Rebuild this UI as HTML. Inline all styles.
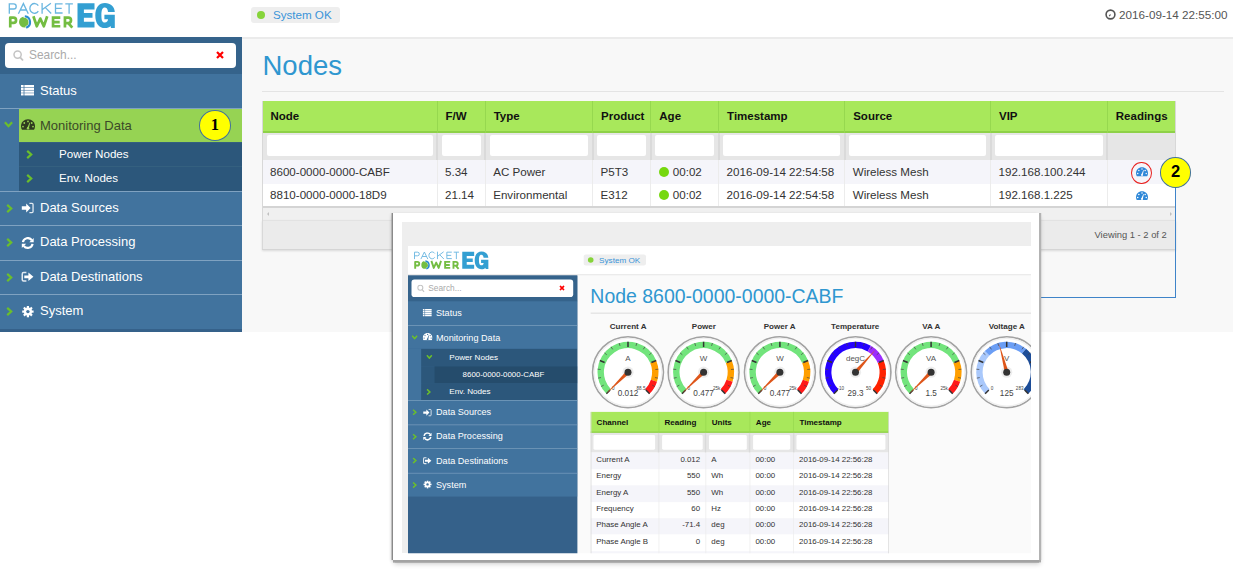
<!DOCTYPE html><html><head><meta charset="utf-8"><style>
*{box-sizing:border-box;margin:0;padding:0}
html,body{width:1234px;height:572px;overflow:hidden;background:#fff;font-family:"Liberation Sans",sans-serif;position:relative}
.abs{position:absolute}
.page{position:absolute;left:0;top:0;width:1234px;height:332px;overflow:hidden;background:#f8f8f8}
.hdr{position:absolute;left:0;top:0;width:100%;background:#fff;border-bottom:2px solid #ebebeb}
.badge{position:absolute;background:#eeeeee;border-radius:3px;color:#3a94d9;font-size:11.6px}
.badge .dot{position:absolute;width:8px;height:8px;border-radius:50%;background:#86d43a}
.side{position:absolute;left:0;width:242px;background:#35618a;overflow:hidden}
.side .srch{position:absolute;left:0;top:0;width:242px;height:36.6px;background:#35638b;z-index:1}
.side .inp{position:absolute;left:5px;top:6px;width:231px;height:25px;background:#fff;border-radius:4px}
.it{position:absolute;left:0;width:242px;background:#41739e;color:#fff;font-size:13px}
.it .t{position:absolute;left:40px;top:9.5px;white-space:nowrap}
.it .t2{position:absolute;left:40px;top:5px;white-space:nowrap;font-size:11.6px}
.th{position:absolute;font-size:11.5px;font-weight:bold;color:#111;white-space:nowrap}
.td{position:absolute;font-size:11.6px;color:#333;white-space:nowrap}
</style></head><body><div class="page"><div class="hdr" style="height:39px"><svg class="abs" style="left:0px;top:0px" width="120" height="32" viewBox="0 0 120 32"><g fill="none" stroke="#6ab6e0" stroke-width="1.3" stroke-linejoin="miter"><path d="M9.3 13.7V3.8H13.6A2.6 2.6 0 0 1 13.6 9H9.3"/><path d="M18.4 13.7L23.4 3.6L28.3 13.7M20.2 10H26.6"/><path d="M38.3 5.7A4.6 4.9 0 1 0 38.3 11.1"/><path d="M42.1 3.1V13.7M50.9 3.3L42.4 9.6M45.4 7.6L51.2 13.5"/><path d="M62.6 3.8H55.5V13H62.6M55.5 8.4H61.7"/><path d="M65.3 3.8H72.9M69.1 3.8V13.7"/></g><g fill="none" stroke="#74bd42" stroke-width="2.7" stroke-linejoin="round"><path d="M10.25 27.6V17.65H13.4A2.65 2.65 0 0 1 13.4 22.95H10.25"/><path d="M33.4 16.3L36.8 26.3L40.3 18.6L43.8 26.3L47.2 16.3"/><path d="M60.3 17.65H53.05V26.25H60.3M53.05 22.15H59.7" stroke-linejoin="miter"/><path d="M64.95 27.6V17.65H68.3A2.7 2.7 0 0 1 68.3 23.05H65M68.2 23L72.3 27.6" stroke-linejoin="miter"/></g><circle cx="24.6" cy="22" r="5.6" fill="#74bd42"/><path d="M23.5 16.6A5.6 5.6 0 0 1 25.8 27.5" fill="none" stroke="#fff" stroke-width="2.4"/><path d="M24.8 16.3A5.9 5.9 0 0 1 26.2 27.7" fill="none" stroke="#2b8ccc" stroke-width="2.1"/><path fill="#339fd2" d="M77.5 3.3H94.5V9.4H83.9V12.9H92.5V17.7H83.9V21.8H94.5V27.6H77.5Z"/><path fill="#339fd2" d="M105 3C110.5 3 114.5 6.5 114.8 11.9L108 11.9C107.8 9 106.5 7.6 104.7 7.6C102.6 7.6 101.4 9.5 101.4 15.5C101.4 21 102.6 22.6 104.8 22.6C106.8 22.6 108 21.2 108 19.3L104.4 19.3L104.4 14.7L114.8 14.7L114.8 28L111 28L110.5 26C109.3 27.5 107.5 28.1 105 28.1C99 28.1 95.3 23.5 95.3 15.5C95.3 7.5 99 3 105 3Z"/></svg><div class="badge" style="left:251px;top:7px;width:89px;height:16.3px"><span class="dot" style="left:6px;top:4.2px"></span><span class="abs" style="left:22px;top:0.9px;white-space:nowrap">System OK</span></div><div class="abs" style="left:1105px;top:8px;font-size:11.7px;color:#555;white-space:nowrap"><svg width="11" height="11" viewBox="0 0 11 11" style="vertical-align:-1px;margin-right:3px"><circle cx="5.5" cy="5.5" r="4.4" fill="none" stroke="#555" stroke-width="1.6"/><path d="M5.5 5.5 4.2 7.2" stroke="#555" stroke-width="1.2"/></svg>2016-09-14 22:55:00</div></div><div class="side" style="top:37px;height:295px"><div class="srch"><div class="inp"><svg class="abs" style="left:8px;top:7px" width="11" height="12" viewBox="0 0 11 12"><circle cx="4.6" cy="4.6" r="3.6" fill="none" stroke="#c4c4c4" stroke-width="1.5"/><path d="M7.2 7.4 10 10.5" stroke="#c4c4c4" stroke-width="1.8"/></svg><span class="abs" style="left:24px;top:5px;font-size:11.9px;color:#aaaaaa">Search...</span><svg class="abs" style="left:211px;top:7.7px" width="8" height="8" viewBox="0 0 8 8"><path d="M1 1 7 7M7 1 1 7" stroke="#ff0000" stroke-width="2.2"/></svg></div></div><div class="it" style="top:36px;height:34.5px"><svg class="abs" style="left:21px;top:11.5px" width="13" height="11" viewBox="0 0 13 11" fill="#fff"><rect x="0" y="0.0" width="2.6" height="2.2"/><rect x="3.4" y="0.0" width="9.6" height="2.2"/><rect x="0" y="2.75" width="2.6" height="2.2"/><rect x="3.4" y="2.75" width="9.6" height="2.2"/><rect x="0" y="5.5" width="2.6" height="2.2"/><rect x="3.4" y="5.5" width="9.6" height="2.2"/><rect x="0" y="8.25" width="2.6" height="2.2"/><rect x="3.4" y="8.25" width="9.6" height="2.2"/></svg><span class="t">Status</span></div><div class="it" style="top:70.5px;height:34.5px;border-top:1px solid #7fa2c1"><svg class="abs" style="left:3.6px;top:12.6px" width="9" height="7" viewBox="0 0 9 7"><path d="M.9 1.2 4.5 5.2 8.1 1.2" fill="none" stroke="#6bbf2b" stroke-width="2.2"/></svg><div class="abs" style="left:19px;top:0;right:0;bottom:0;background:#96d353"></div><svg class="abs" style="left:21px;top:10.5px" width="14" height="11" viewBox="0 0 14 11"><path fill="#2f3b1f" d="M7 .3C3.1.3 0 3.4 0 7.2c0 1.4.4 2.6 1 3.6h12c.6-1 1-2.2 1-3.6C14 3.4 10.9.3 7 .3z"/><g fill="#96d353"><circle cx="7" cy="2.4" r=".9"/><circle cx="3.3" cy="4" r=".9"/><circle cx="10.7" cy="4" r=".9"/><circle cx="2" cy="7.6" r=".9"/><circle cx="12" cy="7.6" r=".9"/><path d="M6.1 9.2 8.6 3.4 9.2 3.7 7.8 9.6z"/><circle cx="7" cy="9.3" r="1.2"/></g></svg><span class="t" style="color:#3b4a28">Monitoring Data</span></div><div class="abs" style="left:0;top:105.0px;width:19px;height:48.6px;background:#41739e"></div><div class="it sub" style="top:105.0px;height:24.3px;left:19px;width:223px;background:#2c577b;border-top:1px solid #34607f"><svg class="abs" style="left:7px;top:7px" width="7" height="9" viewBox="0 0 7 9"><path d="M1.2 .9 5.2 4.5 1.2 8.1" fill="none" stroke="#6bbf2b" stroke-width="2.2"/></svg><span class="t2" style="top:4.2px">Power Nodes</span></div><div class="it sub" style="top:129.3px;height:24.3px;left:19px;width:223px;background:#2c577b;border-top:1px solid #34607f"><svg class="abs" style="left:7px;top:7px" width="7" height="9" viewBox="0 0 7 9"><path d="M1.2 .9 5.2 4.5 1.2 8.1" fill="none" stroke="#6bbf2b" stroke-width="2.2"/></svg><span class="t2" style="top:4.2px">Env. Nodes</span></div><div class="it" style="top:153.60000000000002px;height:34.5px;border-top:1px solid #7fa2c1"><svg class="abs" style="left:6.2px;top:12.1px" width="7" height="9" viewBox="0 0 7 9"><path d="M1.2 .9 5.2 4.5 1.2 8.1" fill="none" stroke="#6bbf2b" stroke-width="2.2"/></svg><svg class="abs" style="left:21px;top:10.5px" width="14" height="13" viewBox="0 0 14 13" fill="#fff"><path d="M0.8 4.3H5.2V1.6L9.6 6 5.2 10.4V7.7H0.8Z"/><path fill="none" stroke="#fff" stroke-opacity=".85" stroke-width="1.3" d="M8.4 1.45H11C11.7 1.45 12.05 1.9 12.05 2.6V9.4C12.05 10.1 11.7 10.55 11 10.55H8.4"/></svg><span class="t" style="top:8.3px">Data Sources</span></div><div class="it" style="top:188.10000000000002px;height:34.5px;border-top:1px solid #7fa2c1"><svg class="abs" style="left:6.2px;top:12.1px" width="7" height="9" viewBox="0 0 7 9"><path d="M1.2 .9 5.2 4.5 1.2 8.1" fill="none" stroke="#6bbf2b" stroke-width="2.2"/></svg><svg class="abs" style="left:21px;top:10.5px" width="14" height="13" viewBox="0 0 14 13" fill="none" stroke="#fff" stroke-width="2.2"><path d="M1.92 5.15A4.9 4.9 0 0 1 10.76 3.19"/><path d="M11.58 6.85A4.9 4.9 0 0 1 2.74 8.81"/><path d="M12.7 .9V5.3H8.3z" fill="#fff" stroke="none"/><path d="M.8 11.1V6.7H5.2z" fill="#fff" stroke="none"/></svg><span class="t" style="top:8.3px">Data Processing</span></div><div class="it" style="top:222.60000000000002px;height:34.5px;border-top:1px solid #7fa2c1"><svg class="abs" style="left:6.2px;top:12.1px" width="7" height="9" viewBox="0 0 7 9"><path d="M1.2 .9 5.2 4.5 1.2 8.1" fill="none" stroke="#6bbf2b" stroke-width="2.2"/></svg><svg class="abs" style="left:21px;top:10.5px" width="14" height="13" viewBox="0 0 14 13"><path fill="none" stroke="#fff" stroke-opacity=".85" stroke-width="1.5" d="M5.4 1.6H2.6C1.8 1.6 1.25 2.1 1.25 2.9V8.7C1.25 9.5 1.8 9.9 2.6 9.9H5.4"/><path fill="#fff" d="M3.3 4.4H7.4V1.5L12.4 5.8 7.4 10.1V7.3H3.3z"/></svg><span class="t" style="top:8.3px">Data Destinations</span></div><div class="it" style="top:257.1px;height:34.5px;border-top:1px solid #7fa2c1"><svg class="abs" style="left:6.2px;top:12.1px" width="7" height="9" viewBox="0 0 7 9"><path d="M1.2 .9 5.2 4.5 1.2 8.1" fill="none" stroke="#6bbf2b" stroke-width="2.2"/></svg><svg class="abs" style="left:21px;top:10.5px" width="14" height="13" viewBox="0 0 14 13" fill="#fff"><rect x="5.8" y="-.1" width="2.2" height="3" transform="rotate(0 6.9 5.6)"/><rect x="5.8" y="-.1" width="2.2" height="3" transform="rotate(45 6.9 5.6)"/><rect x="5.8" y="-.1" width="2.2" height="3" transform="rotate(90 6.9 5.6)"/><rect x="5.8" y="-.1" width="2.2" height="3" transform="rotate(135 6.9 5.6)"/><rect x="5.8" y="-.1" width="2.2" height="3" transform="rotate(180 6.9 5.6)"/><rect x="5.8" y="-.1" width="2.2" height="3" transform="rotate(225 6.9 5.6)"/><rect x="5.8" y="-.1" width="2.2" height="3" transform="rotate(270 6.9 5.6)"/><rect x="5.8" y="-.1" width="2.2" height="3" transform="rotate(315 6.9 5.6)"/><circle cx="6.9" cy="5.6" r="4.1"/><circle cx="6.9" cy="5.6" r="1.7" fill="#41739e"/></svg><span class="t" style="top:8.3px">System</span></div></div><div class="abs" style="left:262.5px;top:50px;font-size:27.5px;color:#2f97d0">Nodes</div><div class="abs" style="left:262px;top:91px;width:962px;height:1px;background:#e4e4e4"></div><div class="abs" style="left:262px;top:101.3px;width:913.5px;height:31.500000000000014px;background:#a8e85b;border-bottom:2px solid #8ed148"></div><div class="abs" style="left:262px;top:132.8px;width:913.5px;height:27.19999999999999px;background:#e6e6e6"></div><div class="abs" style="left:262px;top:160px;width:913.5px;height:24.19999999999999px;background:#f5f5fa"></div><div class="abs" style="left:262px;top:184.2px;width:913.5px;height:22.0px;background:#ffffff"></div><div class="abs" style="left:262px;top:206.2px;width:913.5px;height:2px;background:#d4d4d4"></div><div class="abs" style="left:262px;top:208px;width:913.5px;height:12px;background:#f0f0f0"></div><div class="abs" style="left:262px;top:220px;width:913.5px;height:29.5px;background:#ebebeb;border-top:1px solid #e2e2e2;border-bottom:1px solid #d5d5d5;box-shadow:0 1px 2px rgba(0,0,0,.12)"></div><div class="abs" style="left:262px;top:101.3px;width:1px;height:148.2px;background:#d8d8d8"></div><div class="abs" style="left:1174.5px;top:101.3px;width:1px;height:148.2px;background:#d8d8d8"></div><div class="abs" style="left:266.6px;top:211.6px;width:0;height:0;border-top:2.5px solid transparent;border-bottom:2.5px solid transparent;border-right:2.5px solid #c0c0c0"></div><div class="abs" style="left:1169.5px;top:211.6px;width:0;height:0;border-top:2.5px solid transparent;border-bottom:2.5px solid transparent;border-left:2.5px solid #c0c0c0"></div><div class="abs" style="left:1094.5px;top:228.6px;font-size:9.4px;color:#555;white-space:nowrap">Viewing 1 - 2 of 2</div><div class="abs" style="left:436.5px;top:101.3px;width:1px;height:31.500000000000014px;background:#96d84f"></div><div class="abs" style="left:436px;top:132.8px;width:2px;height:27.19999999999999px;background:#dadada"></div><div class="abs" style="left:436.5px;top:160px;width:1px;height:46.19999999999999px;background:#ececec"></div><div class="abs" style="left:484.7px;top:101.3px;width:1px;height:31.500000000000014px;background:#96d84f"></div><div class="abs" style="left:484.2px;top:132.8px;width:2px;height:27.19999999999999px;background:#dadada"></div><div class="abs" style="left:484.7px;top:160px;width:1px;height:46.19999999999999px;background:#ececec"></div><div class="abs" style="left:592.0px;top:101.3px;width:1px;height:31.500000000000014px;background:#96d84f"></div><div class="abs" style="left:591.5px;top:132.8px;width:2px;height:27.19999999999999px;background:#dadada"></div><div class="abs" style="left:592.0px;top:160px;width:1px;height:46.19999999999999px;background:#ececec"></div><div class="abs" style="left:650.3px;top:101.3px;width:1px;height:31.500000000000014px;background:#96d84f"></div><div class="abs" style="left:649.8px;top:132.8px;width:2px;height:27.19999999999999px;background:#dadada"></div><div class="abs" style="left:650.3px;top:160px;width:1px;height:46.19999999999999px;background:#ececec"></div><div class="abs" style="left:718.1px;top:101.3px;width:1px;height:31.500000000000014px;background:#96d84f"></div><div class="abs" style="left:717.6px;top:132.8px;width:2px;height:27.19999999999999px;background:#dadada"></div><div class="abs" style="left:718.1px;top:160px;width:1px;height:46.19999999999999px;background:#ececec"></div><div class="abs" style="left:844.2px;top:101.3px;width:1px;height:31.500000000000014px;background:#96d84f"></div><div class="abs" style="left:843.7px;top:132.8px;width:2px;height:27.19999999999999px;background:#dadada"></div><div class="abs" style="left:844.2px;top:160px;width:1px;height:46.19999999999999px;background:#ececec"></div><div class="abs" style="left:990.0px;top:101.3px;width:1px;height:31.500000000000014px;background:#96d84f"></div><div class="abs" style="left:989.5px;top:132.8px;width:2px;height:27.19999999999999px;background:#dadada"></div><div class="abs" style="left:990.0px;top:160px;width:1px;height:46.19999999999999px;background:#ececec"></div><div class="abs" style="left:1106.8px;top:101.3px;width:1px;height:31.500000000000014px;background:#96d84f"></div><div class="abs" style="left:1106.3px;top:132.8px;width:2px;height:27.19999999999999px;background:#dadada"></div><div class="abs" style="left:1106.8px;top:160px;width:1px;height:46.19999999999999px;background:#ececec"></div><div class="th" style="left:270.5px;top:110.3px">Node</div><div class="abs" style="left:266.5px;top:135.3px;width:166px;height:20.5px;background:#fff;border-radius:2px"></div><div class="th" style="left:445.5px;top:110.3px">F/W</div><div class="abs" style="left:441.5px;top:135.3px;width:39.19999999999999px;height:20.5px;background:#fff;border-radius:2px"></div><div class="th" style="left:493.7px;top:110.3px">Type</div><div class="abs" style="left:489.7px;top:135.3px;width:98.30000000000001px;height:20.5px;background:#fff;border-radius:2px"></div><div class="th" style="left:601.0px;top:110.3px">Product</div><div class="abs" style="left:597.0px;top:135.3px;width:49.299999999999955px;height:20.5px;background:#fff;border-radius:2px"></div><div class="th" style="left:659.3px;top:110.3px">Age</div><div class="abs" style="left:655.3px;top:135.3px;width:58.80000000000007px;height:20.5px;background:#fff;border-radius:2px"></div><div class="th" style="left:727.1px;top:110.3px">Timestamp</div><div class="abs" style="left:723.1px;top:135.3px;width:117.10000000000002px;height:20.5px;background:#fff;border-radius:2px"></div><div class="th" style="left:853.2px;top:110.3px">Source</div><div class="abs" style="left:849.2px;top:135.3px;width:136.79999999999995px;height:20.5px;background:#fff;border-radius:2px"></div><div class="th" style="left:999.0px;top:110.3px">VIP</div><div class="abs" style="left:995.0px;top:135.3px;width:107.79999999999995px;height:20.5px;background:#fff;border-radius:2px"></div><div class="th" style="left:1115.8px;top:110.3px">Readings</div><div class="td" style="left:270px;top:165.3px">8600-0000-0000-CABF</div><div class="td" style="left:445px;top:165.3px">5.34</div><div class="td" style="left:493.2px;top:165.3px">AC Power</div><div class="td" style="left:600.5px;top:165.3px">P5T3</div><div class="abs" style="left:658.8px;top:166.5px;width:10.5px;height:10.5px;border-radius:50%;background:#76d80e"></div><div class="td" style="left:672.8px;top:165.3px">00:02</div><div class="td" style="left:726.6px;top:165.3px">2016-09-14 22:54:58</div><div class="td" style="left:852.7px;top:165.3px">Wireless Mesh</div><div class="td" style="left:998.5px;top:165.3px">192.168.100.244</div><svg class="abs" style="left:1135.7px;top:167.3px" width="12" height="9.4" viewBox="0 0 14 11"><path fill="#2f88d8" d="M7 .3C3.1.3 0 3.4 0 7.2c0 1.4.4 2.6 1 3.6h12c.6-1 1-2.2 1-3.6C14 3.4 10.9.3 7 .3z"/><g fill="#f5f5fa"><circle cx="7" cy="2.4" r=".9"/><circle cx="3.3" cy="4" r=".9"/><circle cx="10.7" cy="4" r=".9"/><circle cx="2" cy="7.6" r=".9"/><circle cx="12" cy="7.6" r=".9"/><path d="M6.1 9.2 8.6 3.4 9.2 3.7 7.8 9.6z"/><circle cx="7" cy="9.3" r="1.2"/></g></svg><div class="td" style="left:270px;top:188.4px">8810-0000-0000-18D9</div><div class="td" style="left:445px;top:188.4px">21.14</div><div class="td" style="left:493.2px;top:188.4px">Environmental</div><div class="td" style="left:600.5px;top:188.4px">E312</div><div class="abs" style="left:658.8px;top:189.6px;width:10.5px;height:10.5px;border-radius:50%;background:#76d80e"></div><div class="td" style="left:672.8px;top:188.4px">00:02</div><div class="td" style="left:726.6px;top:188.4px">2016-09-14 22:54:58</div><div class="td" style="left:852.7px;top:188.4px">Wireless Mesh</div><div class="td" style="left:998.5px;top:188.4px">192.168.1.225</div><svg class="abs" style="left:1135.7px;top:190.9px" width="12" height="9.4" viewBox="0 0 14 11"><path fill="#2f88d8" d="M7 .3C3.1.3 0 3.4 0 7.2c0 1.4.4 2.6 1 3.6h12c.6-1 1-2.2 1-3.6C14 3.4 10.9.3 7 .3z"/><g fill="#fff"><circle cx="7" cy="2.4" r=".9"/><circle cx="3.3" cy="4" r=".9"/><circle cx="10.7" cy="4" r=".9"/><circle cx="2" cy="7.6" r=".9"/><circle cx="12" cy="7.6" r=".9"/><path d="M6.1 9.2 8.6 3.4 9.2 3.7 7.8 9.6z"/><circle cx="7" cy="9.3" r="1.2"/></g></svg><div class="abs" style="left:1232.6px;top:0;width:2px;height:332px;background:#fff"></div></div><div class="abs" style="left:199.1px;top:110.3px;width:31.8px;height:30.3px;border-radius:50%;background:#ffff00;border:1px solid #41719c"></div><div class="abs" style="left:199.1px;top:114.5px;width:31.8px;text-align:center;font-size:16.5px;font-weight:bold;color:#000;font-family:Liberation Serif">1</div><div class="abs" style="left:1131.2px;top:162px;width:20.5px;height:21.8px;border-radius:50%;border:1.2px solid #e8201e"></div><div class="abs" style="left:1040px;top:187px;width:136px;height:111px;border-right:1.3px solid #3f84c9;border-bottom:1.3px solid #3f84c9"></div><div class="abs" style="left:1159.6px;top:156.8px;width:31.6px;height:31.2px;border-radius:50%;background:#ffff00;border:1px solid #41719c"></div><div class="abs" style="left:1160px;top:162px;width:31px;text-align:center;font-size:16.5px;font-weight:bold;color:#000">2</div><div class="abs" style="left:393px;top:212.8px;width:645.7px;height:347.3px;background:#fff;box-shadow:-1.4px 0 0 #8a8a8a, 2.2px 0 0 #b3b3b3, 0 2.6px 0 #a3a3a3, 2px 2.4px 0 #aaaaaa, 1px 4px 5px rgba(0,0,0,.2), -2px 1px 3px rgba(0,0,0,.12)"></div><div class="abs" style="left:402px;top:222.3px;width:629px;height:330.3px;background:#eeeeee"></div><div class="abs" style="left:408px;top:245.5px;width:890px;height:439.3px;transform:scale(0.7);transform-origin:0 0;overflow:hidden;background:#fafafa"><div class="hdr" style="height:42.3px"><svg class="abs" style="left:0px;top:5.2px" width="120" height="32" viewBox="0 0 120 32"><g fill="none" stroke="#6ab6e0" stroke-width="1.3" stroke-linejoin="miter"><path d="M9.3 13.7V3.8H13.6A2.6 2.6 0 0 1 13.6 9H9.3"/><path d="M18.4 13.7L23.4 3.6L28.3 13.7M20.2 10H26.6"/><path d="M38.3 5.7A4.6 4.9 0 1 0 38.3 11.1"/><path d="M42.1 3.1V13.7M50.9 3.3L42.4 9.6M45.4 7.6L51.2 13.5"/><path d="M62.6 3.8H55.5V13H62.6M55.5 8.4H61.7"/><path d="M65.3 3.8H72.9M69.1 3.8V13.7"/></g><g fill="none" stroke="#74bd42" stroke-width="2.7" stroke-linejoin="round"><path d="M10.25 27.6V17.65H13.4A2.65 2.65 0 0 1 13.4 22.95H10.25"/><path d="M33.4 16.3L36.8 26.3L40.3 18.6L43.8 26.3L47.2 16.3"/><path d="M60.3 17.65H53.05V26.25H60.3M53.05 22.15H59.7" stroke-linejoin="miter"/><path d="M64.95 27.6V17.65H68.3A2.7 2.7 0 0 1 68.3 23.05H65M68.2 23L72.3 27.6" stroke-linejoin="miter"/></g><circle cx="24.6" cy="22" r="5.6" fill="#74bd42"/><path d="M23.5 16.6A5.6 5.6 0 0 1 25.8 27.5" fill="none" stroke="#fff" stroke-width="2.4"/><path d="M24.8 16.3A5.9 5.9 0 0 1 26.2 27.7" fill="none" stroke="#2b8ccc" stroke-width="2.1"/><path fill="#339fd2" d="M77.5 3.3H94.5V9.4H83.9V12.9H92.5V17.7H83.9V21.8H94.5V27.6H77.5Z"/><path fill="#339fd2" d="M105 3C110.5 3 114.5 6.5 114.8 11.9L108 11.9C107.8 9 106.5 7.6 104.7 7.6C102.6 7.6 101.4 9.5 101.4 15.5C101.4 21 102.6 22.6 104.8 22.6C106.8 22.6 108 21.2 108 19.3L104.4 19.3L104.4 14.7L114.8 14.7L114.8 28L111 28L110.5 26C109.3 27.5 107.5 28.1 105 28.1C99 28.1 95.3 23.5 95.3 15.5C95.3 7.5 99 3 105 3Z"/></svg><div class="badge" style="left:251px;top:12.2px;width:89px;height:16.3px"><span class="dot" style="left:6px;top:4.2px"></span><span class="abs" style="left:22px;top:0.9px;white-space:nowrap">System OK</span></div></div><div class="side" style="top:42.3px;height:400px"><div class="srch"><div class="inp"><svg class="abs" style="left:8px;top:7px" width="11" height="12" viewBox="0 0 11 12"><circle cx="4.6" cy="4.6" r="3.6" fill="none" stroke="#c4c4c4" stroke-width="1.5"/><path d="M7.2 7.4 10 10.5" stroke="#c4c4c4" stroke-width="1.8"/></svg><span class="abs" style="left:24px;top:5px;font-size:11.9px;color:#aaaaaa">Search...</span><svg class="abs" style="left:211px;top:7.7px" width="8" height="8" viewBox="0 0 8 8"><path d="M1 1 7 7M7 1 1 7" stroke="#ff0000" stroke-width="2.2"/></svg></div></div><div class="it" style="top:35.900000000000006px;height:34.5px"><svg class="abs" style="left:21px;top:11.5px" width="13" height="11" viewBox="0 0 13 11" fill="#fff"><rect x="0" y="0.0" width="2.6" height="2.2"/><rect x="3.4" y="0.0" width="9.6" height="2.2"/><rect x="0" y="2.75" width="2.6" height="2.2"/><rect x="3.4" y="2.75" width="9.6" height="2.2"/><rect x="0" y="5.5" width="2.6" height="2.2"/><rect x="3.4" y="5.5" width="9.6" height="2.2"/><rect x="0" y="8.25" width="2.6" height="2.2"/><rect x="3.4" y="8.25" width="9.6" height="2.2"/></svg><span class="t">Status</span></div><div class="it" style="top:70.4px;height:34.5px;border-top:1px solid #7fa2c1"><svg class="abs" style="left:4.5px;top:13.5px" width="9" height="7" viewBox="0 0 9 7"><path d="M.9 1.2 4.5 5.2 8.1 1.2" fill="none" stroke="#6bbf2b" stroke-width="2.2"/></svg><svg class="abs" style="left:21px;top:10.5px" width="14" height="11" viewBox="0 0 14 11"><path fill="#fff" d="M7 .3C3.1.3 0 3.4 0 7.2c0 1.4.4 2.6 1 3.6h12c.6-1 1-2.2 1-3.6C14 3.4 10.9.3 7 .3z"/><g fill="#41739e"><circle cx="7" cy="2.4" r=".9"/><circle cx="3.3" cy="4" r=".9"/><circle cx="10.7" cy="4" r=".9"/><circle cx="2" cy="7.6" r=".9"/><circle cx="12" cy="7.6" r=".9"/><path d="M6.1 9.2 8.6 3.4 9.2 3.7 7.8 9.6z"/><circle cx="7" cy="9.3" r="1.2"/></g></svg><span class="t">Monitoring Data</span></div><div class="abs" style="left:0;top:104.9px;width:19px;height:73.19999999999999px;background:#41739e"></div><div class="it" style="top:104.9px;height:24.4px;left:19px;width:223px;background:#2c577b"><svg class="abs" style="left:7px;top:8px" width="9" height="7" viewBox="0 0 9 7"><path d="M.9 1.2 4.5 5.2 8.1 1.2" fill="none" stroke="#6bbf2b" stroke-width="2.2"/></svg><span class="t2">Power Nodes</span></div><div class="it" style="top:129.3px;height:24.4px;left:19px;width:223px;background:#2c577b"><div class="abs" style="left:19px;top:0;right:0;bottom:0;background:#254c6c"></div><span class="t2" style="left:59px;font-size:11.3px">8600-0000-0000-CABF</span></div><div class="it" style="top:153.70000000000002px;height:24.4px;left:19px;width:223px;background:#2c577b"><svg class="abs" style="left:7px;top:8px" width="7" height="9" viewBox="0 0 7 9"><path d="M1.2 .9 5.2 4.5 1.2 8.1" fill="none" stroke="#6bbf2b" stroke-width="2.2"/></svg><span class="t2">Env. Nodes</span></div><div class="it" style="top:178.10000000000002px;height:34.5px;border-top:1px solid #7fa2c1"><svg class="abs" style="left:6.2px;top:12.1px" width="7" height="9" viewBox="0 0 7 9"><path d="M1.2 .9 5.2 4.5 1.2 8.1" fill="none" stroke="#6bbf2b" stroke-width="2.2"/></svg><svg class="abs" style="left:21px;top:10.5px" width="14" height="13" viewBox="0 0 14 13" fill="#fff"><path d="M0.8 4.3H5.2V1.6L9.6 6 5.2 10.4V7.7H0.8Z"/><path fill="none" stroke="#fff" stroke-opacity=".85" stroke-width="1.3" d="M8.4 1.45H11C11.7 1.45 12.05 1.9 12.05 2.6V9.4C12.05 10.1 11.7 10.55 11 10.55H8.4"/></svg><span class="t" style="top:8.3px">Data Sources</span></div><div class="it" style="top:212.60000000000002px;height:34.5px;border-top:1px solid #7fa2c1"><svg class="abs" style="left:6.2px;top:12.1px" width="7" height="9" viewBox="0 0 7 9"><path d="M1.2 .9 5.2 4.5 1.2 8.1" fill="none" stroke="#6bbf2b" stroke-width="2.2"/></svg><svg class="abs" style="left:21px;top:10.5px" width="14" height="13" viewBox="0 0 14 13" fill="none" stroke="#fff" stroke-width="2.2"><path d="M1.92 5.15A4.9 4.9 0 0 1 10.76 3.19"/><path d="M11.58 6.85A4.9 4.9 0 0 1 2.74 8.81"/><path d="M12.7 .9V5.3H8.3z" fill="#fff" stroke="none"/><path d="M.8 11.1V6.7H5.2z" fill="#fff" stroke="none"/></svg><span class="t" style="top:8.3px">Data Processing</span></div><div class="it" style="top:247.10000000000002px;height:34.5px;border-top:1px solid #7fa2c1"><svg class="abs" style="left:6.2px;top:12.1px" width="7" height="9" viewBox="0 0 7 9"><path d="M1.2 .9 5.2 4.5 1.2 8.1" fill="none" stroke="#6bbf2b" stroke-width="2.2"/></svg><svg class="abs" style="left:21px;top:10.5px" width="14" height="13" viewBox="0 0 14 13"><path fill="none" stroke="#fff" stroke-opacity=".85" stroke-width="1.5" d="M5.4 1.6H2.6C1.8 1.6 1.25 2.1 1.25 2.9V8.7C1.25 9.5 1.8 9.9 2.6 9.9H5.4"/><path fill="#fff" d="M3.3 4.4H7.4V1.5L12.4 5.8 7.4 10.1V7.3H3.3z"/></svg><span class="t" style="top:8.3px">Data Destinations</span></div><div class="it" style="top:281.6px;height:34.5px;border-top:1px solid #7fa2c1"><svg class="abs" style="left:6.2px;top:12.1px" width="7" height="9" viewBox="0 0 7 9"><path d="M1.2 .9 5.2 4.5 1.2 8.1" fill="none" stroke="#6bbf2b" stroke-width="2.2"/></svg><svg class="abs" style="left:21px;top:10.5px" width="14" height="13" viewBox="0 0 14 13" fill="#fff"><rect x="5.8" y="-.1" width="2.2" height="3" transform="rotate(0 6.9 5.6)"/><rect x="5.8" y="-.1" width="2.2" height="3" transform="rotate(45 6.9 5.6)"/><rect x="5.8" y="-.1" width="2.2" height="3" transform="rotate(90 6.9 5.6)"/><rect x="5.8" y="-.1" width="2.2" height="3" transform="rotate(135 6.9 5.6)"/><rect x="5.8" y="-.1" width="2.2" height="3" transform="rotate(180 6.9 5.6)"/><rect x="5.8" y="-.1" width="2.2" height="3" transform="rotate(225 6.9 5.6)"/><rect x="5.8" y="-.1" width="2.2" height="3" transform="rotate(270 6.9 5.6)"/><rect x="5.8" y="-.1" width="2.2" height="3" transform="rotate(315 6.9 5.6)"/><circle cx="6.9" cy="5.6" r="4.1"/><circle cx="6.9" cy="5.6" r="1.7" fill="#41739e"/></svg><span class="t" style="top:8.3px">System</span></div></div><div class="abs" style="left:260.5px;top:56.2px;font-size:27.8px;color:#2f97d0;white-space:nowrap">Node 8600-0000-0000-CABF</div><div class="abs" style="left:261px;top:95.4px;width:640px;height:1.4px;background:#e4e4e4"></div><svg class="abs" style="left:260.14px;top:126.00px" width="108.57" height="108.57" viewBox="-38 -38 76 76"><circle r="35.400000000000006" fill="#fff" stroke="#a2a2a2" stroke-width="1.7"/><circle r="33.900000000000006" fill="none" stroke="#f0f0f0" stroke-width="1.4"/><path fill="#72e47c" d="M-21.57 21.57A30.5 30.5 0 1 1 28.18 -11.67L22.27 -9.22A24.1 24.1 0 1 0 -17.04 17.04z"/><path fill="#ff9f00" d="M28.18 -11.67A30.5 30.5 0 0 1 29.01 9.43L22.92 7.45A24.1 24.1 0 0 0 22.27 -9.22z"/><path fill="#ff1a1a" d="M29.01 9.43A30.5 30.5 0 0 1 21.57 21.57L17.04 17.04A24.1 24.1 0 0 0 22.92 7.45z"/><line x1="-21.57" y1="21.57" x2="-17.89" y2="17.89" stroke="#333" stroke-width="1.5"/><line x1="-26.90" y1="14.38" x2="-24.25" y2="12.96" stroke="#444" stroke-width=".7"/><line x1="-29.91" y1="5.95" x2="-26.97" y2="5.36" stroke="#444" stroke-width=".7"/><line x1="-30.35" y1="-2.99" x2="-27.37" y2="-2.70" stroke="#444" stroke-width=".7"/><line x1="-28.18" y1="-11.67" x2="-23.37" y2="-9.68" stroke="#333" stroke-width="1.5"/><line x1="-23.58" y1="-19.35" x2="-21.26" y2="-17.45" stroke="#444" stroke-width=".7"/><line x1="-16.94" y1="-25.36" x2="-15.28" y2="-22.87" stroke="#444" stroke-width=".7"/><line x1="-8.85" y1="-29.19" x2="-7.98" y2="-26.32" stroke="#444" stroke-width=".7"/><line x1="0.00" y1="-30.50" x2="0.00" y2="-25.30" stroke="#333" stroke-width="1.5"/><line x1="8.85" y1="-29.19" x2="7.98" y2="-26.32" stroke="#444" stroke-width=".7"/><line x1="16.94" y1="-25.36" x2="15.28" y2="-22.87" stroke="#444" stroke-width=".7"/><line x1="23.58" y1="-19.35" x2="21.26" y2="-17.45" stroke="#444" stroke-width=".7"/><line x1="28.18" y1="-11.67" x2="23.37" y2="-9.68" stroke="#333" stroke-width="1.5"/><line x1="30.35" y1="-2.99" x2="27.37" y2="-2.70" stroke="#444" stroke-width=".7"/><line x1="29.91" y1="5.95" x2="26.97" y2="5.36" stroke="#444" stroke-width=".7"/><line x1="26.90" y1="14.38" x2="24.25" y2="12.96" stroke="#444" stroke-width=".7"/><line x1="21.57" y1="21.57" x2="17.89" y2="17.89" stroke="#333" stroke-width="1.5"/><text x="0" y="-11.2" text-anchor="middle" font-family="Liberation Sans" font-size="8" fill="#555">A</text><text x="-14.8" y="17.6" text-anchor="middle" font-family="Liberation Sans" font-size="4.6" fill="#444">0</text><text x="13" y="17.6" text-anchor="middle" font-family="Liberation Sans" font-size="4.6" fill="#444">88.5</text><text x="0" y="24" text-anchor="middle" font-family="Liberation Sans" font-size="8.2" fill="#444">0.012</text><circle r="5.6" fill="#ededed"/><path d="M-21.61 21.24L1.33 1.36L1.78 -1.75L-1.33 -1.36z" fill="#de561a"/><circle r="3.5" fill="#333"/></svg><div class="abs" style="left:243.00px;top:108.44px;width:142.86px;text-align:center;font-size:11.5px;font-weight:bold;color:#333">Current A</div><svg class="abs" style="left:368.43px;top:126.00px" width="108.57" height="108.57" viewBox="-38 -38 76 76"><circle r="35.400000000000006" fill="#fff" stroke="#a2a2a2" stroke-width="1.7"/><circle r="33.900000000000006" fill="none" stroke="#f0f0f0" stroke-width="1.4"/><path fill="#72e47c" d="M-21.57 21.57A30.5 30.5 0 1 1 28.18 -11.67L22.27 -9.22A24.1 24.1 0 1 0 -17.04 17.04z"/><path fill="#ff9f00" d="M28.18 -11.67A30.5 30.5 0 0 1 29.01 9.43L22.92 7.45A24.1 24.1 0 0 0 22.27 -9.22z"/><path fill="#ff1a1a" d="M29.01 9.43A30.5 30.5 0 0 1 21.57 21.57L17.04 17.04A24.1 24.1 0 0 0 22.92 7.45z"/><line x1="-21.57" y1="21.57" x2="-17.89" y2="17.89" stroke="#333" stroke-width="1.5"/><line x1="-26.90" y1="14.38" x2="-24.25" y2="12.96" stroke="#444" stroke-width=".7"/><line x1="-29.91" y1="5.95" x2="-26.97" y2="5.36" stroke="#444" stroke-width=".7"/><line x1="-30.35" y1="-2.99" x2="-27.37" y2="-2.70" stroke="#444" stroke-width=".7"/><line x1="-28.18" y1="-11.67" x2="-23.37" y2="-9.68" stroke="#333" stroke-width="1.5"/><line x1="-23.58" y1="-19.35" x2="-21.26" y2="-17.45" stroke="#444" stroke-width=".7"/><line x1="-16.94" y1="-25.36" x2="-15.28" y2="-22.87" stroke="#444" stroke-width=".7"/><line x1="-8.85" y1="-29.19" x2="-7.98" y2="-26.32" stroke="#444" stroke-width=".7"/><line x1="0.00" y1="-30.50" x2="0.00" y2="-25.30" stroke="#333" stroke-width="1.5"/><line x1="8.85" y1="-29.19" x2="7.98" y2="-26.32" stroke="#444" stroke-width=".7"/><line x1="16.94" y1="-25.36" x2="15.28" y2="-22.87" stroke="#444" stroke-width=".7"/><line x1="23.58" y1="-19.35" x2="21.26" y2="-17.45" stroke="#444" stroke-width=".7"/><line x1="28.18" y1="-11.67" x2="23.37" y2="-9.68" stroke="#333" stroke-width="1.5"/><line x1="30.35" y1="-2.99" x2="27.37" y2="-2.70" stroke="#444" stroke-width=".7"/><line x1="29.91" y1="5.95" x2="26.97" y2="5.36" stroke="#444" stroke-width=".7"/><line x1="26.90" y1="14.38" x2="24.25" y2="12.96" stroke="#444" stroke-width=".7"/><line x1="21.57" y1="21.57" x2="17.89" y2="17.89" stroke="#333" stroke-width="1.5"/><text x="0" y="-11.2" text-anchor="middle" font-family="Liberation Sans" font-size="8" fill="#555">W</text><text x="-14.8" y="17.6" text-anchor="middle" font-family="Liberation Sans" font-size="4.6" fill="#444">0</text><text x="13" y="17.6" text-anchor="middle" font-family="Liberation Sans" font-size="4.6" fill="#444">25k</text><text x="0" y="24" text-anchor="middle" font-family="Liberation Sans" font-size="8.2" fill="#444">0.477</text><circle r="5.6" fill="#ededed"/><path d="M-21.61 21.24L1.33 1.36L1.78 -1.75L-1.33 -1.36z" fill="#de561a"/><circle r="3.5" fill="#333"/></svg><div class="abs" style="left:351.29px;top:108.44px;width:142.86px;text-align:center;font-size:11.5px;font-weight:bold;color:#333">Power</div><svg class="abs" style="left:476.57px;top:126.00px" width="108.57" height="108.57" viewBox="-38 -38 76 76"><circle r="35.400000000000006" fill="#fff" stroke="#a2a2a2" stroke-width="1.7"/><circle r="33.900000000000006" fill="none" stroke="#f0f0f0" stroke-width="1.4"/><path fill="#72e47c" d="M-21.57 21.57A30.5 30.5 0 1 1 28.18 -11.67L22.27 -9.22A24.1 24.1 0 1 0 -17.04 17.04z"/><path fill="#ff9f00" d="M28.18 -11.67A30.5 30.5 0 0 1 29.01 9.43L22.92 7.45A24.1 24.1 0 0 0 22.27 -9.22z"/><path fill="#ff1a1a" d="M29.01 9.43A30.5 30.5 0 0 1 21.57 21.57L17.04 17.04A24.1 24.1 0 0 0 22.92 7.45z"/><line x1="-21.57" y1="21.57" x2="-17.89" y2="17.89" stroke="#333" stroke-width="1.5"/><line x1="-26.90" y1="14.38" x2="-24.25" y2="12.96" stroke="#444" stroke-width=".7"/><line x1="-29.91" y1="5.95" x2="-26.97" y2="5.36" stroke="#444" stroke-width=".7"/><line x1="-30.35" y1="-2.99" x2="-27.37" y2="-2.70" stroke="#444" stroke-width=".7"/><line x1="-28.18" y1="-11.67" x2="-23.37" y2="-9.68" stroke="#333" stroke-width="1.5"/><line x1="-23.58" y1="-19.35" x2="-21.26" y2="-17.45" stroke="#444" stroke-width=".7"/><line x1="-16.94" y1="-25.36" x2="-15.28" y2="-22.87" stroke="#444" stroke-width=".7"/><line x1="-8.85" y1="-29.19" x2="-7.98" y2="-26.32" stroke="#444" stroke-width=".7"/><line x1="0.00" y1="-30.50" x2="0.00" y2="-25.30" stroke="#333" stroke-width="1.5"/><line x1="8.85" y1="-29.19" x2="7.98" y2="-26.32" stroke="#444" stroke-width=".7"/><line x1="16.94" y1="-25.36" x2="15.28" y2="-22.87" stroke="#444" stroke-width=".7"/><line x1="23.58" y1="-19.35" x2="21.26" y2="-17.45" stroke="#444" stroke-width=".7"/><line x1="28.18" y1="-11.67" x2="23.37" y2="-9.68" stroke="#333" stroke-width="1.5"/><line x1="30.35" y1="-2.99" x2="27.37" y2="-2.70" stroke="#444" stroke-width=".7"/><line x1="29.91" y1="5.95" x2="26.97" y2="5.36" stroke="#444" stroke-width=".7"/><line x1="26.90" y1="14.38" x2="24.25" y2="12.96" stroke="#444" stroke-width=".7"/><line x1="21.57" y1="21.57" x2="17.89" y2="17.89" stroke="#333" stroke-width="1.5"/><text x="0" y="-11.2" text-anchor="middle" font-family="Liberation Sans" font-size="8" fill="#555">W</text><text x="-14.8" y="17.6" text-anchor="middle" font-family="Liberation Sans" font-size="4.6" fill="#444">0</text><text x="13" y="17.6" text-anchor="middle" font-family="Liberation Sans" font-size="4.6" fill="#444">25k</text><text x="0" y="24" text-anchor="middle" font-family="Liberation Sans" font-size="8.2" fill="#444">0.477</text><circle r="5.6" fill="#ededed"/><path d="M-21.61 21.24L1.33 1.36L1.78 -1.75L-1.33 -1.36z" fill="#de561a"/><circle r="3.5" fill="#333"/></svg><div class="abs" style="left:459.43px;top:108.44px;width:142.86px;text-align:center;font-size:11.5px;font-weight:bold;color:#333">Power A</div><svg class="abs" style="left:584.57px;top:126.00px" width="108.57" height="108.57" viewBox="-38 -38 76 76"><circle r="35.400000000000006" fill="#fff" stroke="#a2a2a2" stroke-width="1.7"/><circle r="33.900000000000006" fill="none" stroke="#f0f0f0" stroke-width="1.4"/><path fill="#2500ff" d="M-21.57 21.57A30.5 30.5 0 0 1 15.36 -26.35L12.14 -20.82A24.1 24.1 0 0 0 -17.04 17.04z"/><path fill="#9c2cff" d="M15.36 -26.35A30.5 30.5 0 0 1 28.18 -11.67L22.27 -9.22A24.1 24.1 0 0 0 12.14 -20.82z"/><path fill="#ff2200" d="M28.18 -11.67A30.5 30.5 0 0 1 21.57 21.57L17.04 17.04A24.1 24.1 0 0 0 22.27 -9.22z"/><line x1="-21.57" y1="21.57" x2="-17.89" y2="17.89" stroke="#333" stroke-width="1.5"/><line x1="-26.90" y1="14.38" x2="-24.25" y2="12.96" stroke="#444" stroke-width=".7"/><line x1="-29.91" y1="5.95" x2="-26.97" y2="5.36" stroke="#444" stroke-width=".7"/><line x1="-30.35" y1="-2.99" x2="-27.37" y2="-2.70" stroke="#444" stroke-width=".7"/><line x1="-28.18" y1="-11.67" x2="-23.37" y2="-9.68" stroke="#333" stroke-width="1.5"/><line x1="-23.58" y1="-19.35" x2="-21.26" y2="-17.45" stroke="#444" stroke-width=".7"/><line x1="-16.94" y1="-25.36" x2="-15.28" y2="-22.87" stroke="#444" stroke-width=".7"/><line x1="-8.85" y1="-29.19" x2="-7.98" y2="-26.32" stroke="#444" stroke-width=".7"/><line x1="0.00" y1="-30.50" x2="0.00" y2="-25.30" stroke="#333" stroke-width="1.5"/><line x1="8.85" y1="-29.19" x2="7.98" y2="-26.32" stroke="#444" stroke-width=".7"/><line x1="16.94" y1="-25.36" x2="15.28" y2="-22.87" stroke="#444" stroke-width=".7"/><line x1="23.58" y1="-19.35" x2="21.26" y2="-17.45" stroke="#444" stroke-width=".7"/><line x1="28.18" y1="-11.67" x2="23.37" y2="-9.68" stroke="#333" stroke-width="1.5"/><line x1="30.35" y1="-2.99" x2="27.37" y2="-2.70" stroke="#444" stroke-width=".7"/><line x1="29.91" y1="5.95" x2="26.97" y2="5.36" stroke="#444" stroke-width=".7"/><line x1="26.90" y1="14.38" x2="24.25" y2="12.96" stroke="#444" stroke-width=".7"/><line x1="21.57" y1="21.57" x2="17.89" y2="17.89" stroke="#333" stroke-width="1.5"/><text x="0" y="-11.2" text-anchor="middle" font-family="Liberation Sans" font-size="8" fill="#555">degC</text><text x="-14.8" y="17.6" text-anchor="middle" font-family="Liberation Sans" font-size="4.6" fill="#444">-10</text><text x="13" y="17.6" text-anchor="middle" font-family="Liberation Sans" font-size="4.6" fill="#444">50</text><text x="0" y="24" text-anchor="middle" font-family="Liberation Sans" font-size="8.2" fill="#444">29.3</text><circle r="5.6" fill="#ededed"/><path d="M20.20 -22.59L-1.42 -1.27L-1.67 1.86L1.42 1.27z" fill="#de561a"/><circle r="3.5" fill="#333"/></svg><div class="abs" style="left:567.43px;top:108.44px;width:142.86px;text-align:center;font-size:11.5px;font-weight:bold;color:#333">Temperature</div><svg class="abs" style="left:693.14px;top:126.00px" width="108.57" height="108.57" viewBox="-38 -38 76 76"><circle r="35.400000000000006" fill="#fff" stroke="#a2a2a2" stroke-width="1.7"/><circle r="33.900000000000006" fill="none" stroke="#f0f0f0" stroke-width="1.4"/><path fill="#72e47c" d="M-21.57 21.57A30.5 30.5 0 1 1 28.18 -11.67L22.27 -9.22A24.1 24.1 0 1 0 -17.04 17.04z"/><path fill="#ff9f00" d="M28.18 -11.67A30.5 30.5 0 0 1 29.01 9.43L22.92 7.45A24.1 24.1 0 0 0 22.27 -9.22z"/><path fill="#ff1a1a" d="M29.01 9.43A30.5 30.5 0 0 1 21.57 21.57L17.04 17.04A24.1 24.1 0 0 0 22.92 7.45z"/><line x1="-21.57" y1="21.57" x2="-17.89" y2="17.89" stroke="#333" stroke-width="1.5"/><line x1="-26.90" y1="14.38" x2="-24.25" y2="12.96" stroke="#444" stroke-width=".7"/><line x1="-29.91" y1="5.95" x2="-26.97" y2="5.36" stroke="#444" stroke-width=".7"/><line x1="-30.35" y1="-2.99" x2="-27.37" y2="-2.70" stroke="#444" stroke-width=".7"/><line x1="-28.18" y1="-11.67" x2="-23.37" y2="-9.68" stroke="#333" stroke-width="1.5"/><line x1="-23.58" y1="-19.35" x2="-21.26" y2="-17.45" stroke="#444" stroke-width=".7"/><line x1="-16.94" y1="-25.36" x2="-15.28" y2="-22.87" stroke="#444" stroke-width=".7"/><line x1="-8.85" y1="-29.19" x2="-7.98" y2="-26.32" stroke="#444" stroke-width=".7"/><line x1="0.00" y1="-30.50" x2="0.00" y2="-25.30" stroke="#333" stroke-width="1.5"/><line x1="8.85" y1="-29.19" x2="7.98" y2="-26.32" stroke="#444" stroke-width=".7"/><line x1="16.94" y1="-25.36" x2="15.28" y2="-22.87" stroke="#444" stroke-width=".7"/><line x1="23.58" y1="-19.35" x2="21.26" y2="-17.45" stroke="#444" stroke-width=".7"/><line x1="28.18" y1="-11.67" x2="23.37" y2="-9.68" stroke="#333" stroke-width="1.5"/><line x1="30.35" y1="-2.99" x2="27.37" y2="-2.70" stroke="#444" stroke-width=".7"/><line x1="29.91" y1="5.95" x2="26.97" y2="5.36" stroke="#444" stroke-width=".7"/><line x1="26.90" y1="14.38" x2="24.25" y2="12.96" stroke="#444" stroke-width=".7"/><line x1="21.57" y1="21.57" x2="17.89" y2="17.89" stroke="#333" stroke-width="1.5"/><text x="0" y="-11.2" text-anchor="middle" font-family="Liberation Sans" font-size="8" fill="#555">VA</text><text x="-14.8" y="17.6" text-anchor="middle" font-family="Liberation Sans" font-size="4.6" fill="#444">0</text><text x="13" y="17.6" text-anchor="middle" font-family="Liberation Sans" font-size="4.6" fill="#444">25k</text><text x="0" y="24" text-anchor="middle" font-family="Liberation Sans" font-size="8.2" fill="#444">1.5</text><circle r="5.6" fill="#ededed"/><path d="M-21.61 21.24L1.33 1.36L1.78 -1.75L-1.33 -1.36z" fill="#de561a"/><circle r="3.5" fill="#333"/></svg><div class="abs" style="left:676.00px;top:108.44px;width:142.86px;text-align:center;font-size:11.5px;font-weight:bold;color:#333">VA A</div><svg class="abs" style="left:801.14px;top:126.00px" width="108.57" height="108.57" viewBox="-38 -38 76 76"><circle r="35.400000000000006" fill="#fff" stroke="#a2a2a2" stroke-width="1.7"/><circle r="33.900000000000006" fill="none" stroke="#f0f0f0" stroke-width="1.4"/><path fill="#a9c8fb" d="M-21.57 21.57A30.5 30.5 0 0 1 -21.90 -21.23L-17.31 -16.77A24.1 24.1 0 0 0 -17.04 17.04z"/><path fill="#6b9ef5" d="M-21.90 -21.23A30.5 30.5 0 0 1 19.37 -23.56L15.30 -18.62A24.1 24.1 0 0 0 -17.31 -16.77z"/><path fill="#1d4d98" d="M19.37 -23.56A30.5 30.5 0 0 1 21.57 21.57L17.04 17.04A24.1 24.1 0 0 0 15.30 -18.62z"/><line x1="-21.57" y1="21.57" x2="-17.89" y2="17.89" stroke="#333" stroke-width="1.5"/><line x1="-26.90" y1="14.38" x2="-24.25" y2="12.96" stroke="#444" stroke-width=".7"/><line x1="-29.91" y1="5.95" x2="-26.97" y2="5.36" stroke="#444" stroke-width=".7"/><line x1="-30.35" y1="-2.99" x2="-27.37" y2="-2.70" stroke="#444" stroke-width=".7"/><line x1="-28.18" y1="-11.67" x2="-23.37" y2="-9.68" stroke="#333" stroke-width="1.5"/><line x1="-23.58" y1="-19.35" x2="-21.26" y2="-17.45" stroke="#444" stroke-width=".7"/><line x1="-16.94" y1="-25.36" x2="-15.28" y2="-22.87" stroke="#444" stroke-width=".7"/><line x1="-8.85" y1="-29.19" x2="-7.98" y2="-26.32" stroke="#444" stroke-width=".7"/><line x1="0.00" y1="-30.50" x2="0.00" y2="-25.30" stroke="#333" stroke-width="1.5"/><line x1="8.85" y1="-29.19" x2="7.98" y2="-26.32" stroke="#444" stroke-width=".7"/><line x1="16.94" y1="-25.36" x2="15.28" y2="-22.87" stroke="#444" stroke-width=".7"/><line x1="23.58" y1="-19.35" x2="21.26" y2="-17.45" stroke="#444" stroke-width=".7"/><line x1="28.18" y1="-11.67" x2="23.37" y2="-9.68" stroke="#333" stroke-width="1.5"/><line x1="30.35" y1="-2.99" x2="27.37" y2="-2.70" stroke="#444" stroke-width=".7"/><line x1="29.91" y1="5.95" x2="26.97" y2="5.36" stroke="#444" stroke-width=".7"/><line x1="26.90" y1="14.38" x2="24.25" y2="12.96" stroke="#444" stroke-width=".7"/><line x1="21.57" y1="21.57" x2="17.89" y2="17.89" stroke="#333" stroke-width="1.5"/><text x="0" y="-11.2" text-anchor="middle" font-family="Liberation Sans" font-size="8" fill="#555">V</text><text x="-14.8" y="17.6" text-anchor="middle" font-family="Liberation Sans" font-size="4.6" fill="#444">0</text><text x="13" y="17.6" text-anchor="middle" font-family="Liberation Sans" font-size="4.6" fill="#444">283</text><text x="0" y="24" text-anchor="middle" font-family="Liberation Sans" font-size="8.2" fill="#444">125</text><circle r="5.6" fill="#ededed"/><path d="M-7.84 -29.27L-1.84 0.49L0.65 2.41L1.84 -0.49z" fill="#de561a"/><circle r="3.5" fill="#333"/></svg><div class="abs" style="left:784.00px;top:108.44px;width:142.86px;text-align:center;font-size:11.5px;font-weight:bold;color:#333">Voltage A</div><div class="abs" style="left:260.9px;top:236.9px;width:426.1px;height:30.099999999999994px;background:#a8e85b;border-bottom:2px solid #8ed148"></div><div class="abs" style="left:260.9px;top:267px;width:426.1px;height:28.399999999999977px;background:#e6e6e6"></div><div class="abs" style="left:260.9px;top:295.4px;width:426.1px;height:23.4px;background:#f5f5fa"></div><div class="abs" style="left:260.9px;top:318.79999999999995px;width:426.1px;height:23.4px;background:#fff"></div><div class="abs" style="left:260.9px;top:342.2px;width:426.1px;height:23.4px;background:#f5f5fa"></div><div class="abs" style="left:260.9px;top:365.59999999999997px;width:426.1px;height:23.4px;background:#fff"></div><div class="abs" style="left:260.9px;top:389.0px;width:426.1px;height:23.4px;background:#f5f5fa"></div><div class="abs" style="left:260.9px;top:412.4px;width:426.1px;height:23.4px;background:#fff"></div><div class="abs" style="left:260.9px;top:435.79999999999995px;width:426.1px;height:23.4px;background:#f5f5fa"></div><div class="abs" style="left:260.9px;top:236.9px;width:1px;height:300px;background:#d8d8d8"></div><div class="abs" style="left:686.0px;top:236.9px;width:1px;height:300px;background:#d8d8d8"></div><div class="abs" style="left:357.5px;top:236.9px;width:1px;height:30.099999999999994px;background:#96d84f"></div><div class="abs" style="left:357px;top:267px;width:2px;height:28.399999999999977px;background:#dadada"></div><div class="abs" style="left:357.5px;top:295.4px;width:1px;height:200px;background:#ececec"></div><div class="abs" style="left:424.9px;top:236.9px;width:1px;height:30.099999999999994px;background:#96d84f"></div><div class="abs" style="left:424.4px;top:267px;width:2px;height:28.399999999999977px;background:#dadada"></div><div class="abs" style="left:424.9px;top:295.4px;width:1px;height:200px;background:#ececec"></div><div class="abs" style="left:487.9px;top:236.9px;width:1px;height:30.099999999999994px;background:#96d84f"></div><div class="abs" style="left:487.4px;top:267px;width:2px;height:28.399999999999977px;background:#dadada"></div><div class="abs" style="left:487.9px;top:295.4px;width:1px;height:200px;background:#ececec"></div><div class="abs" style="left:550.2px;top:236.9px;width:1px;height:30.099999999999994px;background:#96d84f"></div><div class="abs" style="left:549.7px;top:267px;width:2px;height:28.399999999999977px;background:#dadada"></div><div class="abs" style="left:550.2px;top:295.4px;width:1px;height:200px;background:#ececec"></div><div class="th" style="left:269.4px;top:245.9px">Channel</div><div class="abs" style="left:265.4px;top:269.5px;width:88.10000000000002px;height:21.399999999999977px;background:#fff;border-radius:2px"></div><div class="th" style="left:366.5px;top:245.9px">Reading</div><div class="abs" style="left:362.5px;top:269.5px;width:58.39999999999998px;height:21.399999999999977px;background:#fff;border-radius:2px"></div><div class="th" style="left:433.9px;top:245.9px">Units</div><div class="abs" style="left:429.9px;top:269.5px;width:54.0px;height:21.399999999999977px;background:#fff;border-radius:2px"></div><div class="th" style="left:496.9px;top:245.9px">Age</div><div class="abs" style="left:492.9px;top:269.5px;width:53.30000000000007px;height:21.399999999999977px;background:#fff;border-radius:2px"></div><div class="th" style="left:559.2px;top:245.9px">Timestamp</div><div class="abs" style="left:555.2px;top:269.5px;width:127.29999999999995px;height:21.399999999999977px;background:#fff;border-radius:2px"></div><div class="td" style="font-size:11.3px;left:268.9px;top:298.59999999999997px">Current A</div><div class="td" style="font-size:11.3px;left:358px;width:59.39999999999998px;text-align:right;top:298.59999999999997px">0.012</div><div class="td" style="font-size:11.3px;left:433.4px;top:298.59999999999997px">A</div><div class="td" style="font-size:11.3px;left:496.4px;top:298.59999999999997px">00:00</div><div class="td" style="font-size:11.3px;left:558.7px;top:298.59999999999997px">2016-09-14 22:56:28</div><div class="td" style="font-size:11.3px;left:268.9px;top:321.99999999999994px">Energy</div><div class="td" style="font-size:11.3px;left:358px;width:59.39999999999998px;text-align:right;top:321.99999999999994px">550</div><div class="td" style="font-size:11.3px;left:433.4px;top:321.99999999999994px">Wh</div><div class="td" style="font-size:11.3px;left:496.4px;top:321.99999999999994px">00:00</div><div class="td" style="font-size:11.3px;left:558.7px;top:321.99999999999994px">2016-09-14 22:56:28</div><div class="td" style="font-size:11.3px;left:268.9px;top:345.4px">Energy A</div><div class="td" style="font-size:11.3px;left:358px;width:59.39999999999998px;text-align:right;top:345.4px">550</div><div class="td" style="font-size:11.3px;left:433.4px;top:345.4px">Wh</div><div class="td" style="font-size:11.3px;left:496.4px;top:345.4px">00:00</div><div class="td" style="font-size:11.3px;left:558.7px;top:345.4px">2016-09-14 22:56:28</div><div class="td" style="font-size:11.3px;left:268.9px;top:368.79999999999995px">Frequency</div><div class="td" style="font-size:11.3px;left:358px;width:59.39999999999998px;text-align:right;top:368.79999999999995px">60</div><div class="td" style="font-size:11.3px;left:433.4px;top:368.79999999999995px">Hz</div><div class="td" style="font-size:11.3px;left:496.4px;top:368.79999999999995px">00:00</div><div class="td" style="font-size:11.3px;left:558.7px;top:368.79999999999995px">2016-09-14 22:56:28</div><div class="td" style="font-size:11.3px;left:268.9px;top:392.2px">Phase Angle A</div><div class="td" style="font-size:11.3px;left:358px;width:59.39999999999998px;text-align:right;top:392.2px">-71.4</div><div class="td" style="font-size:11.3px;left:433.4px;top:392.2px">deg</div><div class="td" style="font-size:11.3px;left:496.4px;top:392.2px">00:00</div><div class="td" style="font-size:11.3px;left:558.7px;top:392.2px">2016-09-14 22:56:28</div><div class="td" style="font-size:11.3px;left:268.9px;top:415.59999999999997px">Phase Angle B</div><div class="td" style="font-size:11.3px;left:358px;width:59.39999999999998px;text-align:right;top:415.59999999999997px">0</div><div class="td" style="font-size:11.3px;left:433.4px;top:415.59999999999997px">deg</div><div class="td" style="font-size:11.3px;left:496.4px;top:415.59999999999997px">00:00</div><div class="td" style="font-size:11.3px;left:558.7px;top:415.59999999999997px">2016-09-14 22:56:28</div><div class="td" style="font-size:11.3px;left:268.9px;top:438.99999999999994px">Phase Angle C</div><div class="td" style="font-size:11.3px;left:358px;width:59.39999999999998px;text-align:right;top:438.99999999999994px">0</div><div class="td" style="font-size:11.3px;left:433.4px;top:438.99999999999994px">deg</div><div class="td" style="font-size:11.3px;left:496.4px;top:438.99999999999994px">00:00</div><div class="td" style="font-size:11.3px;left:558.7px;top:438.99999999999994px">2016-09-14 22:56:28</div></div></body></html>
